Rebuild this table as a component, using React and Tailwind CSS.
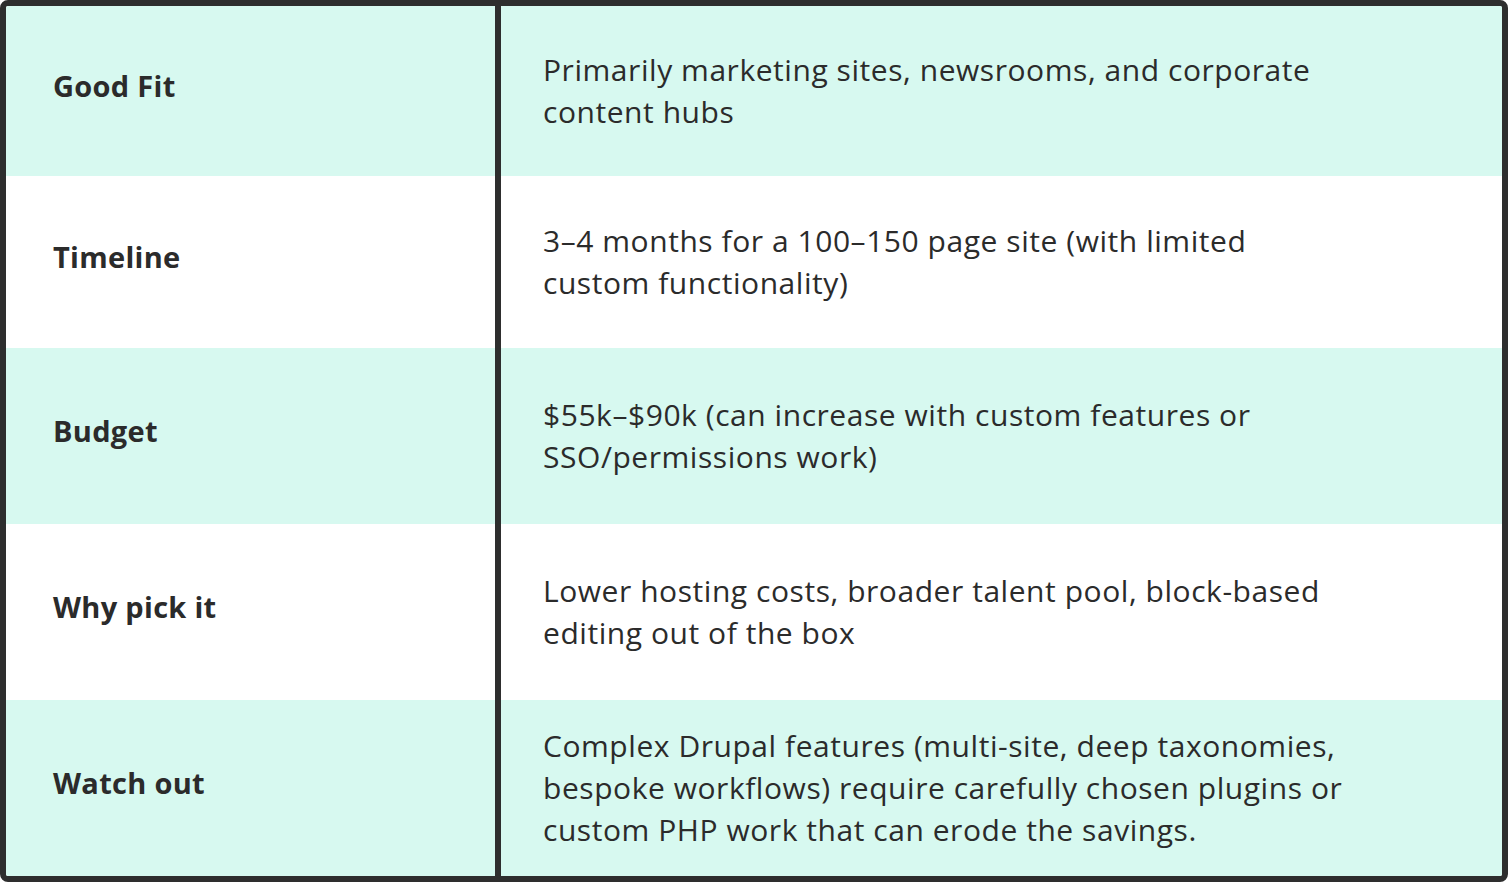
const rows = [
    {
        label: "Good Fit",
        lines: ["Primarily marketing sites, newsrooms, and corporate", "content hubs"],
        h: "h-[170px]",
        tint: true,
    },
    {
        label: "Timeline",
        lines: ["3–4 months for a 100–150 page site (with limited", "custom functionality)"],
        h: "h-[172px]",
        tint: false,
    },
    {
        label: "Budget",
        lines: ["$55k–$90k (can increase with custom features or", "SSO/permissions work)"],
        h: "h-[176px]",
        tint: true,
    },
    {
        label: "Why pick it",
        lines: ["Lower hosting costs, broader talent pool, block-based", "editing out of the box"],
        h: "h-[176px]",
        tint: false,
    },
    {
        label: "Watch out",
        lines: [
            "Complex Drupal features (multi-site, deep taxonomies,",
            "bespoke workflows) require carefully chosen plugins or",
            "custom PHP work that can erode the savings.",
        ],
        h: "h-[176px]",
        tint: true,
    },
];

const App = () => {
    return (
        <div className="w-[1508px] h-[882px] bg-white">
            {/* table card */}
            <div
                className="h-full border-[6px] border-[#2e2e2e] rounded-[8px] overflow-hidden text-[#2b2b2b]"
                style={{ fontFamily: "'Open Sans', 'Noto Sans', sans-serif" }}
            >
                {rows.map((row) => (
                    <div
                        key={row.label}
                        className={`grid grid-cols-[495px_1fr] ${row.h} ${row.tint ? "bg-[#d7f9f0]" : "bg-white"}`}
                    >
                        <div className="flex items-center pl-[47px] pb-[11px] border-r-[6px] border-[#2e2e2e]">
                            <span className="text-[29px] font-bold tracking-[0.3px]">{row.label}</span>
                        </div>
                        <div className="flex items-center pl-[42px] pb-[1px]">
                            <p className="text-[30px] leading-[42px] tracking-[0.55px] whitespace-nowrap">
                                {row.lines.map((line) => (
                                    <span key={line} className="block">
                                        {line}
                                    </span>
                                ))}
                            </p>
                        </div>
                    </div>
                ))}
            </div>
        </div>
    );
};

export default App;
